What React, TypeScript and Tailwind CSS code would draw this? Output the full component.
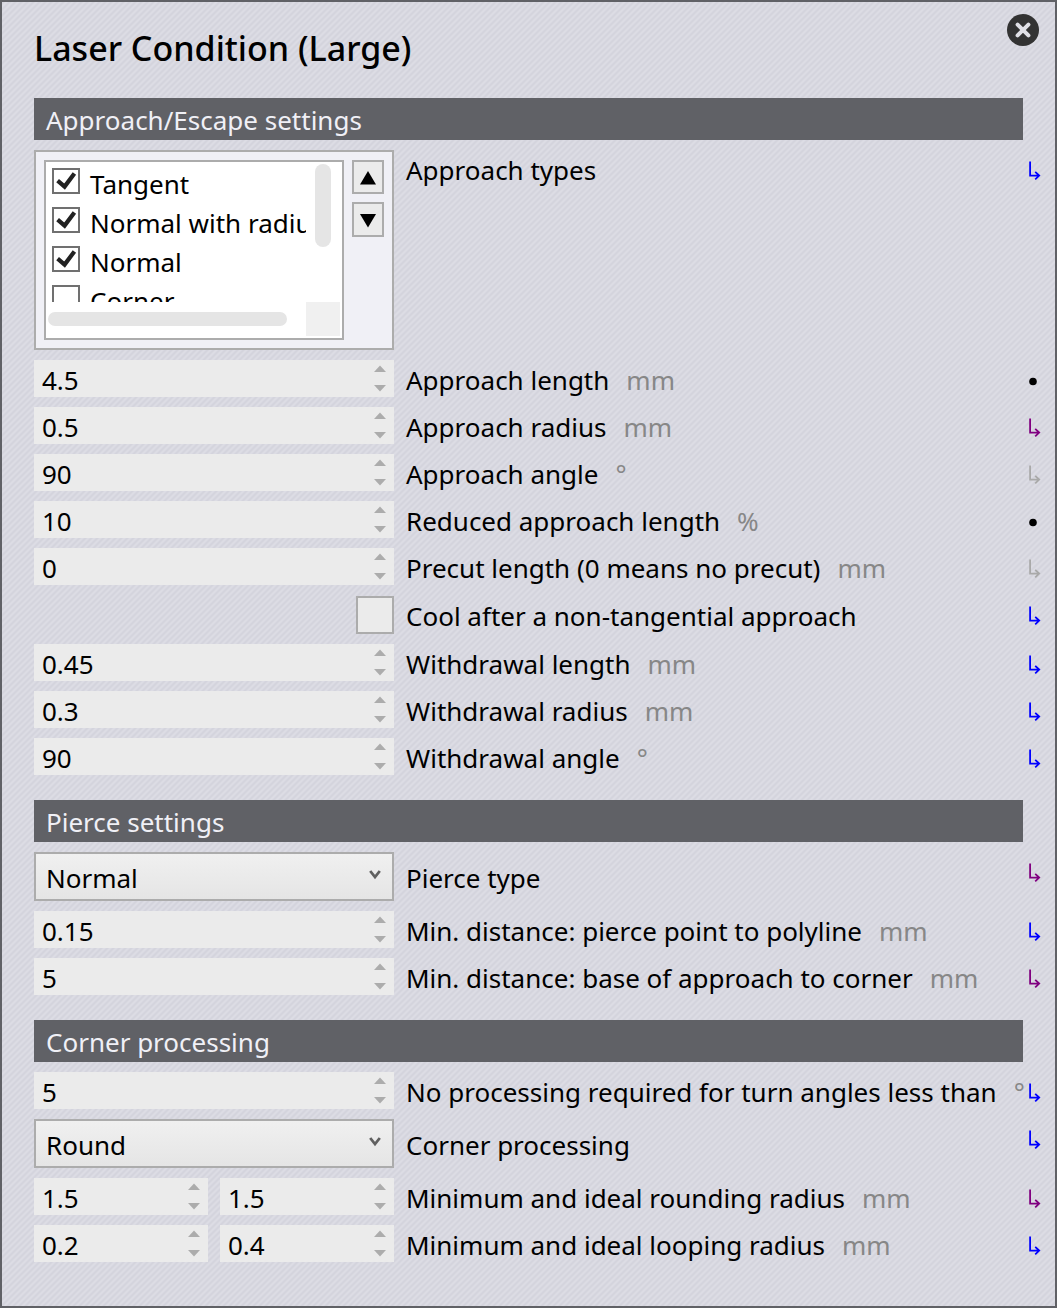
import { useId, useState, type ReactNode } from "react";

type Status = "blue" | "purple" | "gray" | "dot";

const statusColor: Record<Exclude<Status, "dot">, string> = {
  blue: "text-[#0000ff]",
  purple: "text-[#800080]",
  gray: "text-[#a9a9a9]",
};

function StatusMark({ status }: { status: Status }) {
  if (status === "dot") {
    return (
      <svg className="mt-[11px] h-5 w-3 shrink-0" viewBox="0 0 12 20" aria-label="Own value">
        <circle cx="4" cy="10.5" r="3.8" fill="black" />
      </svg>
    );
  }
  return (
    <svg
      className={`mt-[11px] h-5 w-3 shrink-0 ${statusColor[status]}`}
      viewBox="0 0 12 20"
      fill="none"
      stroke="currentColor"
      strokeWidth="1.8"
      aria-label="Inherited value"
    >
      <path d="M1.1 0.5V14.6H10.2M6.2 10.8L10.2 14.6L6.2 18.4" />
    </svg>
  );
}

function Row({
  children,
  label,
  unit,
  status,
  htmlFor,
  tall = false,
}: {
  children: ReactNode;
  label: string;
  unit?: string;
  status: Status;
  htmlFor?: string;
  tall?: boolean;
}) {
  return (
    <div className="flex items-start">
      <div className="w-[360px] shrink-0">{children}</div>
      <div
        className={`flex min-w-0 flex-1 gap-[17px] whitespace-nowrap pl-3 pt-[3px] ${
          tall ? "h-[37px] items-center" : "items-center self-stretch"
        }`}
      >
        <label htmlFor={htmlFor} className="leading-[34px]">
          {label}
        </label>
        {unit && <span className="leading-[34px] text-[#878787]">{unit}</span>}
      </div>
      <StatusMark status={status} />
    </div>
  );
}

function NumberBox({ id, initial, label }: { id: string; initial: string; label: string }) {
  const [value, setValue] = useState(initial);
  const step = (delta: number) => setValue((v) => String(Number((Number(v) + delta).toFixed(2))));
  return (
    <div className="flex h-[37px] min-w-0 flex-1 bg-[#ebebeb]">
      <input
        id={id}
        type="text"
        inputMode="decimal"
        aria-label={label}
        value={value}
        onChange={(e) => setValue(e.target.value)}
        className="h-[37px] w-full min-w-0 flex-1 bg-transparent pl-2 pt-[3px] outline-none"
      />
      <div className="flex w-7 shrink-0 flex-col text-[#acacac]">
        <button type="button" aria-label={`Increase ${label}`} onClick={() => step(1)} className="flex h-[18px] justify-center pt-[5px]">
          <svg className="h-[7px] w-3" viewBox="0 0 12 7">
            <path d="M0 7L6 0.5L12 7Z" fill="currentColor" />
          </svg>
        </button>
        <button type="button" aria-label={`Decrease ${label}`} onClick={() => step(-1)} className="flex h-[19px] justify-center pt-[7px]">
          <svg className="h-[7px] w-3" viewBox="0 0 12 7">
            <path d="M0 0L6 6.5L12 0Z" fill="currentColor" />
          </svg>
        </button>
      </div>
    </div>
  );
}

function NumberRow({ label, unit, status, values }: { label: string; unit: string; status: Status; values: string[] }) {
  const id = useId();
  return (
    <Row label={label} unit={unit} status={status} htmlFor={id}>
      <div className="flex gap-3">
        {values.map((v, i) => (
          <NumberBox key={i} id={i === 0 ? id : `${id}-${i}`} initial={v} label={label} />
        ))}
      </div>
    </Row>
  );
}

function SelectRow({ label, status, options }: { label: string; status: Status; options: string[] }) {
  const id = useId();
  return (
    <Row label={label} status={status} htmlFor={id}>
      <div className="grid">
        <select
          id={id}
          defaultValue={options[0]}
          className="col-start-1 row-start-1 h-[49px] w-full appearance-none rounded-none border-2 border-[#acacac] bg-linear-to-b from-[#f0f0f0] to-[#e5e5e5] pl-[10px] pt-[3px] outline-none"
        >
          {options.map((o) => (
            <option key={o}>{o}</option>
          ))}
        </select>
        <svg
          className="pointer-events-none col-start-1 row-start-1 mr-[13px] mt-[18px] h-[10px] w-3 justify-self-end"
          viewBox="0 0 12 10"
          fill="none"
          stroke="#606060"
          strokeWidth="2.8"
        >
          <path d="M1.2 1L6 7L10.8 1" />
        </svg>
      </div>
    </Row>
  );
}

function Section({ title, children }: { title: string; children: ReactNode }) {
  return (
    <section className="flex flex-col gap-[10px]">
      <h2 className="mr-[18px] h-[42px] bg-[#606166] pl-3 pt-px leading-[42px] text-[#f0f0f6]">{title}</h2>
      {children}
    </section>
  );
}

function TypeItem({ label, checked }: { label: string; checked: boolean }) {
  return (
    <label className="flex h-[39px] items-start gap-[10px] whitespace-nowrap">
      <span className="grid shrink-0">
        <input
          type="checkbox"
          defaultChecked={checked}
          className="peer col-start-1 row-start-1 h-[26px] w-7 appearance-none border-2 border-[#707070] bg-white"
        />
        <svg
          className="pointer-events-none col-start-1 row-start-1 hidden h-[26px] w-7 peer-checked:block"
          viewBox="0 0 28 26"
          fill="none"
          stroke="#212121"
          strokeWidth="4.2"
        >
          <path d="M5.6 12.6L12.6 18.6L22.4 5.4" />
        </svg>
      </span>
      <span className="leading-[32px]">{label}</span>
    </label>
  );
}

function ApproachTypes() {
  const types = [
    { label: "Tangent", checked: true },
    { label: "Normal with radius", checked: true },
    { label: "Normal", checked: true },
    { label: "Corner", checked: false },
  ];
  return (
    <Row label="Approach types" status="blue" tall>
      <div className="flex h-[200px] items-start gap-2 border-2 border-[#acacac] bg-[#f0f0f6] p-2">
        <div
          role="group"
          aria-label="Approach types"
          className="grid h-[180px] min-w-0 flex-1 grid-cols-[minmax(0,1fr)_34px] grid-rows-[minmax(0,1fr)_34px] border-2 border-[#acacac] bg-white p-0.5"
        >
          <div className="overflow-hidden pl-1 pt-1">
            {types.map((t) => (
              <TypeItem key={t.label} {...t} />
            ))}
          </div>
          <div className="flex justify-center">
            <div className="h-[83px] w-4 rounded-full bg-[#e5e5e5]" />
          </div>
          <div className="flex items-center">
            <div className="mr-[19px] h-[14px] flex-1 rounded-full bg-[#e5e5e5]" />
          </div>
          <div className="bg-[#f0f0f0]" />
        </div>
        <div className="flex flex-col gap-2">
          <button type="button" aria-label="Move up" className="flex h-[34px] w-8 items-center justify-center border-2 border-[#acacac] bg-[#ebebeb]">
            <svg className="mt-0.5 h-[14px] w-4" viewBox="0 0 16 14">
              <path d="M0 13.5L8 0L16 13.5Z" fill="black" />
            </svg>
          </button>
          <button type="button" aria-label="Move down" className="flex h-[35px] w-8 items-center justify-center border-2 border-[#acacac] bg-[#ebebeb]">
            <svg className="mt-0.5 h-[14px] w-4" viewBox="0 0 16 14">
              <path d="M0 0L8 13.5L16 0Z" fill="black" />
            </svg>
          </button>
        </div>
      </div>
    </Row>
  );
}

function CoolRow() {
  const id = useId();
  return (
    <Row label="Cool after a non-tangential approach" status="blue" htmlFor={id}>
      <div className="flex h-[39px] items-end justify-end">
        <input
          id={id}
          type="checkbox"
          className="size-[38px] appearance-none border-2 border-[#acacac] bg-[#ebebeb] checked:bg-[#707070]"
        />
      </div>
    </Row>
  );
}

export default function App() {
  return (
    <main className="min-h-screen border-2 border-[#606166] bg-[#d8d8e0] bg-[linear-gradient(135deg,#d4d4dd_20%,#dcdce4_30%,#dcdce4_45%,#d4d4dd_55%,#d4d4dd_70%,#dcdce4_80%,#dcdce4_95%,#d4d4dd_100%)] bg-[length:6px_6px] pb-11 pl-8 pr-[14px] font-['Noto_Sans',sans-serif] text-[26px] text-black">
      <header className="flex h-24 items-start justify-between">
        <h1 className="mt-[23px] text-[34px] font-medium leading-[46px]">Laser Condition (Large)</h1>
        <button type="button" aria-label="Close" className="mr-0.5 mt-3">
          <svg className="size-8" viewBox="0 0 32 32">
            <circle cx="16" cy="16" r="16" fill="#333333" />
            <path d="M10.6 10.6L21.4 21.4M21.4 10.6L10.6 21.4" stroke="#e0e0e6" strokeWidth="4" strokeLinecap="round" />
          </svg>
        </button>
      </header>
      <form className="flex flex-col gap-[25px]" onSubmit={(e) => e.preventDefault()}>
        <Section title="Approach/Escape settings">
          <ApproachTypes />
          <NumberRow label="Approach length" unit="mm" status="dot" values={["4.5"]} />
          <NumberRow label="Approach radius" unit="mm" status="purple" values={["0.5"]} />
          <NumberRow label="Approach angle" unit="°" status="gray" values={["90"]} />
          <NumberRow label="Reduced approach length" unit="%" status="dot" values={["10"]} />
          <NumberRow label="Precut length (0 means no precut)" unit="mm" status="gray" values={["0"]} />
          <CoolRow />
          <NumberRow label="Withdrawal length" unit="mm" status="blue" values={["0.45"]} />
          <NumberRow label="Withdrawal radius" unit="mm" status="blue" values={["0.3"]} />
          <NumberRow label="Withdrawal angle" unit="°" status="blue" values={["90"]} />
        </Section>
        <Section title="Pierce settings">
          <SelectRow label="Pierce type" status="purple" options={["Normal"]} />
          <NumberRow label="Min. distance: pierce point to polyline" unit="mm" status="blue" values={["0.15"]} />
          <NumberRow label="Min. distance: base of approach to corner" unit="mm" status="purple" values={["5"]} />
        </Section>
        <Section title="Corner processing">
          <NumberRow label="No processing required for turn angles less than" unit="°" status="blue" values={["5"]} />
          <SelectRow label="Corner processing" status="blue" options={["Round"]} />
          <NumberRow label="Minimum and ideal rounding radius" unit="mm" status="purple" values={["1.5", "1.5"]} />
          <NumberRow label="Minimum and ideal looping radius" unit="mm" status="blue" values={["0.2", "0.4"]} />
        </Section>
      </form>
    </main>
  );
}
